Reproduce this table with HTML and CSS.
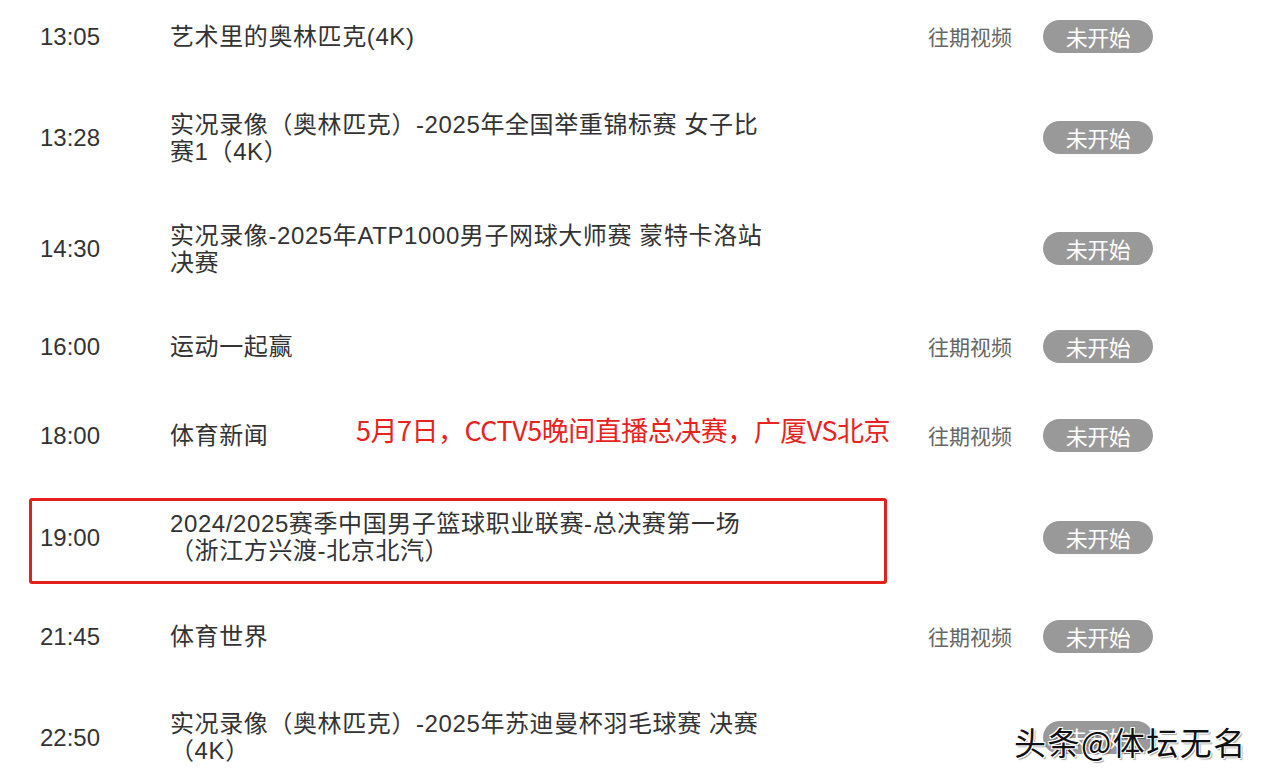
FILE: index.html
```html
<!DOCTYPE html>
<html lang="zh-CN">
<head>
<meta charset="utf-8">
<title>节目单</title>
<link rel="stylesheet" href="styles.css">
</head>
<body>
<div class="page">
  <ul class="list">
    <li class="row row-1">
      <span class="time">13:05</span>
      <span class="title">艺术里的奥林匹克(4K)</span>
      <span class="replay">往期视频</span>
      <span class="status">未开始</span>
    </li>
    <li class="row row-2">
      <span class="time">13:28</span>
      <span class="title">实况录像（奥林匹克）-2025年全国举重锦标赛 女子比<br>赛1（4K）</span>
      <span class="replay"></span>
      <span class="status">未开始</span>
    </li>
    <li class="row row-3">
      <span class="time">14:30</span>
      <span class="title">实况录像-2025年ATP1000男子网球大师赛 蒙特卡洛站<br>决赛</span>
      <span class="replay"></span>
      <span class="status">未开始</span>
    </li>
    <li class="row row-4">
      <span class="time">16:00</span>
      <span class="title">运动一起赢</span>
      <span class="replay">往期视频</span>
      <span class="status">未开始</span>
    </li>
    <li class="row row-5">
      <span class="time">18:00</span>
      <span class="title">体育新闻</span>
      <span class="replay">往期视频</span>
      <span class="status">未开始</span>
      <span class="note">5月7日，CCTV5晚间直播总决赛，广厦VS北京</span>
    </li>
    <li class="row row-6">
      <span class="time">19:00</span>
      <span class="title">2024/2025赛季中国男子篮球职业联赛-总决赛第一场<br>（浙江方兴渡-北京北汽）</span>
      <span class="replay"></span>
      <span class="status">未开始</span>
      <span class="highlight"></span>
    </li>
    <li class="row row-7">
      <span class="time">21:45</span>
      <span class="title">体育世界</span>
      <span class="replay">往期视频</span>
      <span class="status">未开始</span>
    </li>
    <li class="row row-8">
      <span class="time">22:50</span>
      <span class="title">实况录像（奥林匹克）-2025年苏迪曼杯羽毛球赛 决赛<br>（4K）</span>
      <span class="replay"></span>
      <span class="status">未开始</span>
    </li>
  </ul>
  <div class="watermark">头条@体坛无名</div>
</div>
</body>
</html>
```
FILE: styles.css
```css
html, body {
  margin: 0;
  padding: 0;
  background: #ffffff;
}

body {
  width: 1271px;
  height: 782px;
  overflow: hidden;
  font-family: "Liberation Sans", "Noto Sans CJK SC", sans-serif;
  color: #333333;
}

.page {
  position: relative;
  width: 1271px;
  height: 782px;
  overflow: hidden;
}

.list {
  list-style: none;
  margin: -14px 0 0 0;
  padding: 0 0 0 40px;
  width: 1113px;
}

.row {
  position: relative;
  display: grid;
  grid-template-columns: 130px 600px 158px 115px 110px;
  align-items: center;
}

.row-1 { height: 100px; }
.row-2 { height: 103px; }
.row-3 { height: 119px; }
.row-4 { height: 76px; }
.row-5 { height: 102px; }
.row-6 { height: 102px; }
.row-7 { height: 96px; }
.row-8 { height: 106px; }

.time {
  grid-column: 1;
  font-size: 24px;
  line-height: 27px;
  color: #333333;
}

.title {
  grid-column: 2;
  font-size: 24px;
  line-height: 27px;
  color: #333333;
  white-space: nowrap;
  letter-spacing: 0.6px;
}

.replay {
  grid-column: 4;
  font-family: "Noto Sans CJK SC", sans-serif;
  font-size: 21px;
  line-height: 27px;
  color: #666666;
}

.status {
  grid-column: 5;
  height: 33px;
  border-radius: 17px;
  background: #999999;
  color: #ffffff;
  font-family: "Noto Sans CJK SC", sans-serif;
  font-size: 22px;
  line-height: 33px;
  text-align: center;
  letter-spacing: -0.5px;
}

.note {
  position: absolute;
  left: 316px;
  top: calc(50% - 20px);
  font-family: "Noto Sans CJK SC", sans-serif;
  font-size: 27px;
  line-height: 30px;
  color: #e8231e;
  white-space: nowrap;
  letter-spacing: -0.5px;
}

.highlight {
  position: absolute;
  left: -11px;
  top: 12px;
  width: 858px;
  height: 86px;
  box-sizing: border-box;
  border: 3px solid #e3211c;
  border-radius: 3px;
}

.watermark {
  position: absolute;
  left: 1014px;
  top: 720px;
  font-family: "Noto Sans CJK SC", sans-serif;
  font-size: 32px;
  line-height: 42px;
  color: #111111;
  white-space: nowrap;
  letter-spacing: 1.5px;
  text-shadow:
    1px 1px 0 #ffffff,
    -1px -1px 0 #ffffff,
    1px -1px 0 #ffffff,
    -1px 1px 0 #ffffff,
    2px 2px 1px rgba(0, 0, 0, 0.35);
}
```
